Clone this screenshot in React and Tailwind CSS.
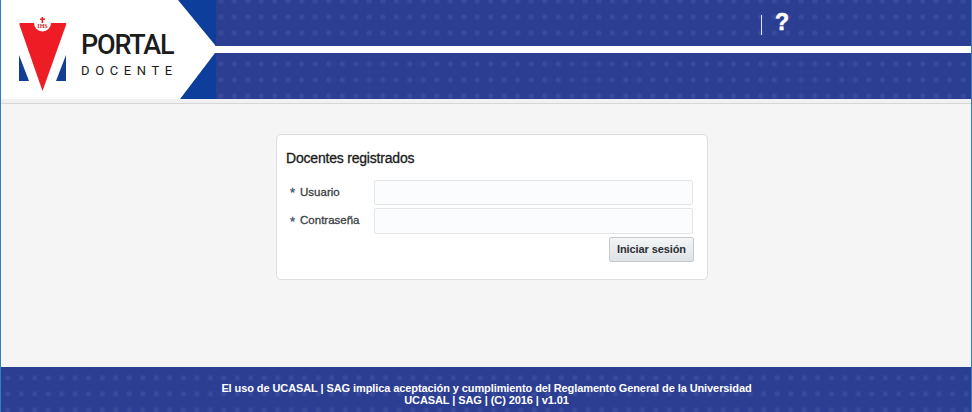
import React from "react";

const dots =
  "bg-[#2c3e92] bg-[radial-gradient(circle,#394b9b_1.5px,transparent_3.5px)] bg-[length:13.5px_16px]";

const labelClass =
  "flex w-[88px] items-center pl-[4px] text-[11.5px] text-[#3a3f43] [-webkit-text-stroke:0.3px_#3a3f43]";

// Logo panel with the chevron cut and the red/blue emblem
const LogoPanel = () => (
  <div className="absolute left-0 top-0 h-[99px] w-[216px]">
    <svg width="216" height="99" viewBox="1 0 216 99">
      <polygon points="178,0 216,0 216,45 215,45" fill="#0d3e9b" />
      <polygon points="215,53 216,53 216,99 180,99" fill="#0d3e9b" />
      <polygon points="0,0 178,0 215,45 216,49 215,53 180,99 0,99" fill="#ffffff" />
      <path d="M19 55 L29 81 L19 81 Z" fill="#123f94" />
      <path d="M66 55 L56 81 L66 81 Z" fill="#123f94" />
      <path d="M20 23 H66 Q66.5 23 66 25 L42.5 91 L19.5 25 Q19 23 20 23 Z" fill="#ee1c25" />
      <path d="M34 23 A8.5 8.5 0 0 0 51 23 Z" fill="#ffffff" />
      <rect x="41.6" y="17" width="1.6" height="6" fill="#ee1c25" />
      <rect x="40" y="18.5" width="5" height="1.4" fill="#ee1c25" />
      <text x="42.5" y="28" textAnchor="middle" fontSize="6" fontWeight="700" fill="#c8252c" fontFamily="'Liberation Serif', serif">
        IHS
      </text>
    </svg>
    <div className="absolute left-[80px] top-[28px] font-['Roboto',sans-serif] text-[#1c1c1c]">
      <div className="text-[27px] font-medium leading-[34px] tracking-[-1.2px]">PORTAL</div>
      <div className="mt-[2px] text-[13px] leading-[14px] tracking-[5.6px]">DOCENTE</div>
    </div>
  </div>
);

export default function App() {
  return (
    <div className="flex h-[412px] w-[972px] flex-col overflow-hidden border-x border-x-[#2f80bf] bg-[#f5f5f5] font-['Liberation_Sans',Arial,sans-serif]">
      {/* Header */}
      <header className="relative h-[104px] shrink-0 border-b border-[#d6d6d6] bg-[#f1f1f1]">
        <div className={`flex h-[46px] items-start bg-[position:-3px_-7px] pl-[760px] pt-[15px] ${dots}`}>
          <div className="h-[20px] w-px bg-[#dfe3f2]" />
          <span className="ml-[13px] mt-[-5px] text-[23px] font-bold leading-[24px] text-white [-webkit-text-stroke:0.6px_#ffffff]">?</span>
        </div>
        <div className="h-[7px] bg-white" />
        <div className={`h-[46px] bg-[position:-3px_3px] ${dots}`} />
        <LogoPanel />
      </header>

      {/* Login card */}
      <main className="flex-1 pl-[275px] pt-[30px]">
        <div className="h-[146px] w-[432px] rounded-[5px] border border-[#dcdfe1] bg-white px-[9px] pt-[14px]">
          <h1 className="text-[14px] leading-[18px] tracking-[-0.2px] text-[#1a1a1a] [-webkit-text-stroke:0.3px_#1a1a1a]">Docentes registrados</h1>
          <div className="mt-[13px] flex flex-col gap-[3px] pr-[5px]">
            <div className="flex h-[25px] items-center">
              <label className={labelClass}>
                <span className="mr-[5px] text-[13px] font-normal leading-none text-[#2f6191]">*</span>
                Usuario
              </label>
              <input className="h-[25px] flex-1 rounded-[2px] border border-[#e3e6e8] bg-[#fbfcfe]" />
            </div>
            <div className="flex h-[26px] items-center">
              <label className={labelClass}>
                <span className="mr-[5px] text-[13px] font-normal leading-none text-[#2f6191]">*</span>
                Contraseña
              </label>
              <input type="password" className="h-[26px] flex-1 rounded-[2px] border border-[#e3e6e8] bg-[#fbfcfe]" />
            </div>
          </div>
          <div className="mt-[3px] flex justify-end pr-[4px]">
            <button className="h-[25px] w-[85px] rounded-[2px] border border-[#c6cacd] bg-gradient-to-b from-[#f3f5f6] to-[#dfe3e6] text-[11px] font-bold tracking-[-0.1px] text-[#2b2f33]">
              Iniciar sesión
            </button>
          </div>
        </div>
      </main>

      {/* Footer */}
      <footer className={`h-[45px] shrink-0 bg-[position:0_3px] pl-[1px] pt-[15px] text-center text-[11px] font-bold leading-[12px] tracking-[-0.09px] text-white ${dots}`}>
        <p>El uso de UCASAL | SAG implica aceptación y cumplimiento del Reglamento General de la Universidad</p>
        <p>UCASAL | SAG | (C) 2016 | v1.01</p>
      </footer>
    </div>
  );
}
